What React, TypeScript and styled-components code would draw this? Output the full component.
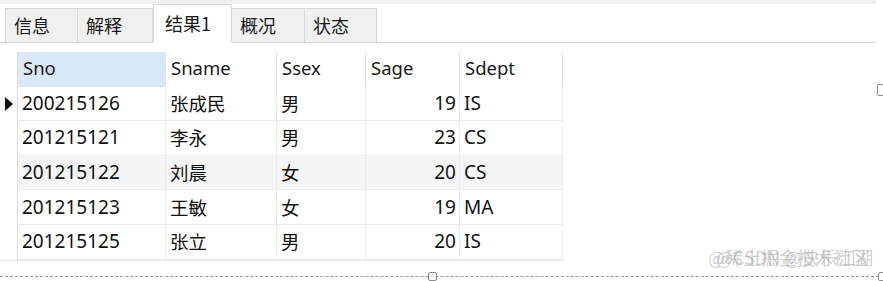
import React from "react";
import styled, { createGlobalStyle } from "styled-components";

const GlobalStyle = createGlobalStyle`
  html, body { margin: 0; padding: 0; background: #fff; }
  body { font-family: "Noto Sans", "Noto Sans CJK SC", sans-serif; }
`;

const Page = styled.div`
  position: relative;
  width: 883px;
  height: 281px;
  overflow: hidden;
  background: #fff;
  font-family: "Noto Sans", "Noto Sans CJK SC", sans-serif;
  color: #111;
`;

const TopBand = styled.div`
  width: 876px;
  height: 4px;
  background: #f0f0f0;
`;

const TabRow = styled.div`
  display: flex;
  align-items: flex-end;
  width: 876px;
  height: 39px;
  padding-left: 5px;
  box-sizing: border-box;
  border-bottom: 1px solid #d6d6d6;
`;

const Tab = styled.div<{ $active?: boolean; $w: number }>`
  display: flex;
  align-items: center;
  width: ${(p) => p.$w}px;
  height: ${(p) => (p.$active ? 39 : 35)}px;
  box-sizing: border-box;
  padding: 0 0 2px ${(p) => (p.$active ? 11 : 8)}px;
  margin-bottom: -1px;
  background: ${(p) => (p.$active ? "#fff" : "#f0f0f0")};
  border: 1px solid #d9d9d9;
  border-bottom: 1px solid ${(p) => (p.$active ? "#fff" : "#d6d6d6")};
  border-left-width: ${(p) => (p.$active ? 1 : 0)}px;
  font-family: "Noto Sans CJK SC", sans-serif;
  font-size: 18px;
  color: #1a1a1a;
  &:first-child { border-left-width: 1px; }
`;

const Grid = styled.div`
  display: grid;
  grid-template-columns: 18px 148px 111px 89px 94px 103px;
  grid-auto-rows: 34.6px;
  width: 563px;
  margin-top: 9px;
  border-bottom: 1px solid #e8e8e8;
`;

const Indicator = styled.div`
  display: flex;
  align-items: center;
  padding-left: 5px;
  border-right: 1px solid #dcdcdc;
  background: #fff;
`;

const Arrow = styled.div`
  width: 0;
  height: 0;
  border-style: solid;
  border-width: 7px 0 7px 8px;
  border-color: transparent transparent transparent #111;
`;

const HeadCell = styled.div<{ $sel?: boolean }>`
  display: flex;
  align-items: center;
  padding: 0 0 3px 5px;
  background: ${(p) => (p.$sel ? "#d9e9f7" : "#fff")};
  border-right: 1px solid #e4e4e4;
  font-size: 18.5px;
  color: #1a1a1a;
`;

const Cell = styled.div<{ $alt?: boolean; $num?: boolean; $cjk?: boolean }>`
  display: flex;
  align-items: center;
  justify-content: ${(p) => (p.$num ? "flex-end" : "flex-start")};
  padding: 0 ${(p) => (p.$num ? 3 : 0)}px 1px ${(p) => (p.$num ? 0 : 4)}px;
  background: ${(p) => (p.$alt ? "#f5f5f5" : "#fff")};
  border-right: 1px solid #ececec;
  border-bottom: 1px solid #ececec;
  font-family: ${(p) =>
    p.$cjk ? '"Noto Sans CJK SC", sans-serif' : '"Noto Sans", "Noto Sans CJK SC", sans-serif'};
  font-size: ${(p) => (p.$cjk ? 18.5 : 19)}px;
  color: #111;
`;

const DashedLine = styled.div`
  position: absolute;
  left: 0;
  right: 4px;
  top: 276px;
  border-top: 1px dashed #9a9a9a;
`;

const Handle = styled.div<{ $x: number; $y: number; $w: number; $h: number }>`
  position: absolute;
  left: ${(p) => p.$x}px;
  top: ${(p) => p.$y}px;
  width: ${(p) => p.$w}px;
  height: ${(p) => p.$h}px;
  box-sizing: border-box;
  background: #fff;
  border: 1px solid #8a8a8a;
  border-radius: 2px;
`;

// two faded watermarks stacked on top of each other, as in the screenshot
const Watermark = styled.div`
  position: absolute;
  left: 708px;
  top: 244px;
  display: grid;
  font-family: "Noto Sans CJK SC", sans-serif;
  font-size: 18px;
  color: rgba(150, 150, 150, 0.45);
  white-space: nowrap;
  & > span { grid-area: 1 / 1; }
  & > span + span { padding-left: 8px; }
`;

const tabs = [
  { label: "信息", w: 73 },
  { label: "解释", w: 75 },
  { label: "结果1", w: 79, active: true },
  { label: "概况", w: 73 },
  { label: "状态", w: 72 },
];

const headers = ["Sno", "Sname", "Ssex", "Sage", "Sdept"];

const rows = [
  ["200215126", "张成民", "男", "19", "IS"],
  ["201215121", "李永", "男", "23", "CS"],
  ["201215122", "刘晨", "女", "20", "CS"],
  ["201215123", "王敏", "女", "19", "MA"],
  ["201215125", "张立", "男", "20", "IS"],
];

export default function App() {
  return (
    <Page>
      <GlobalStyle />
      <TopBand />
      <TabRow>
        {tabs.map((t) => (
          <Tab key={t.label} $w={t.w} $active={t.active}>
            {t.label}
          </Tab>
        ))}
      </TabRow>
      <Grid>
        <Indicator />
        {headers.map((h, i) => (
          <HeadCell key={h} $sel={i === 0}>
            {h}
          </HeadCell>
        ))}
        {rows.map((r, ri) => {
          const alt = ri === 2;
          return (
            <React.Fragment key={r[0]}>
              <Indicator>{ri === 0 && <Arrow />}</Indicator>
              <Cell $alt={alt}>{r[0]}</Cell>
              <Cell $alt={alt} $cjk>{r[1]}</Cell>
              <Cell $alt={alt} $cjk>{r[2]}</Cell>
              <Cell $alt={alt} $num>{r[3]}</Cell>
              <Cell $alt={alt}>{r[4]}</Cell>
            </React.Fragment>
          );
        })}
      </Grid>
      <Handle $x={877} $y={84} $w={7} $h={12} />
      <Watermark>
        <span>@稀土掘金技术社区</span>
        <span>@CSDN @快乐江湖</span>
      </Watermark>
      <DashedLine />
      <Handle $x={428} $y={272} $w={9} $h={9} />
      <Handle $x={878} $y={272} $w={8} $h={9} />
    </Page>
  );
}
